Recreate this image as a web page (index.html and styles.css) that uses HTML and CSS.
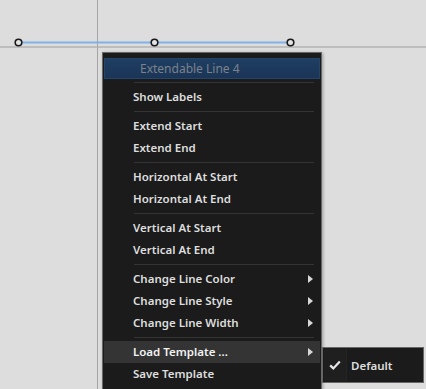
FILE: index.html
```html
<!DOCTYPE html>
<html lang="en">
	<head>
		<meta charset="UTF-8" />
		<meta name="viewport" content="width=device-width, initial-scale=1.0" />
		<title>Chart Context Menu</title>
		<link rel="stylesheet" href="styles.css">
	</head>

	<body>
		<div class="chart">
			<svg class="canvas" width="426" height="389" viewBox="0 0 426 389">
				<line x1="97.5" y1="0" x2="97.5" y2="389" stroke="#a4a4a4" stroke-width="1" />
				<line x1="0" y1="47" x2="426" y2="47" stroke="#b2b2b2" stroke-width="1.5" />
				<line x1="18" y1="42.5" x2="290" y2="42.5" stroke="#7fb2ea" stroke-width="2" />
				<circle cx="18.5" cy="42.5" r="3.3" fill="#e4e4e4" stroke="#1a1a1a" stroke-width="1.6" />
				<circle cx="154.5" cy="42.5" r="3.3" fill="#e4e4e4" stroke="#1a1a1a" stroke-width="1.6" />
				<circle cx="290.5" cy="42.5" r="3.3" fill="#e4e4e4" stroke="#1a1a1a" stroke-width="1.6" />
			</svg>

			<div class="menu">
				<div class="menu-title">Extendable Line 4</div>
				<div class="separator"></div>
				<div class="menu-item">Show Labels</div>
				<div class="separator"></div>
				<div class="menu-item">Extend Start</div>
				<div class="menu-item">Extend End</div>
				<div class="separator"></div>
				<div class="menu-item">Horizontal At Start</div>
				<div class="menu-item">Horizontal At End</div>
				<div class="separator"></div>
				<div class="menu-item">Vertical At Start</div>
				<div class="menu-item">Vertical At End</div>
				<div class="separator"></div>
				<div class="menu-item has-sub">Change Line Color</div>
				<div class="menu-item has-sub">Change Line Style</div>
				<div class="menu-item has-sub">Change Line Width</div>
				<div class="separator"></div>
				<div class="menu-item has-sub active">Load Template ...</div>
				<div class="menu-item">Save Template</div>
			</div>

			<div class="submenu">
				<div class="submenu-item">
					<span class="check">
						<svg width="12" height="10" viewBox="0 0 12 10">
							<path d="M1.2 5.4 L4.3 8.4 L10.8 1.4" fill="none" stroke="#e6e6e6" stroke-width="2.2" />
						</svg>
					</span>
					<span class="label">Default</span>
				</div>
			</div>
		</div>
	</body>
</html>
```

FILE: styles.css
```css
:root {
	--bg-color: #dddddd;
	--menu-bg: #1b1b1b;
	--menu-border: #676767;
	--separator-color: #343434;
	--text-color: #dedede;
	--title-color: #7b828c;
	--active-bg: #343434;
}

body {
	margin: 0;
	background-color: var(--bg-color);
	font-family: "Noto Sans", "Open Sans", sans-serif;
	overflow: hidden;
}

.chart {
	position: relative;
	width: 426px;
	height: 389px;
	overflow: hidden;
}

.canvas {
	position: absolute;
	left: 0;
	top: 0;
}

.menu {
	position: absolute;
	left: 102px;
	top: 52px;
	width: 216px;
	padding: 5px 1px 40px;
	background-color: var(--menu-bg);
	border: 1px solid var(--menu-border);
	box-shadow: 1px 1px 3px rgba(0, 0, 0, 0.3);
}

.menu-title {
	height: 21px;
	line-height: 19px;
	padding-left: 35px;
	font-size: 12px;
	color: var(--title-color);
	background: linear-gradient(#1f3e62, #1a3556);
	border: 1px solid #24466c;
	box-sizing: border-box;
}

.separator {
	height: 1px;
	margin: 3px 6px 3px 30px;
	background-color: var(--separator-color);
}

.menu-item {
	position: relative;
	height: 22px;
	line-height: 22px;
	padding-left: 29px;
	font-size: 11.5px;
	font-weight: 600;
	color: var(--text-color);
	white-space: nowrap;
}

.menu-item.active {
	background-color: var(--active-bg);
	color: #f2f2f2;
}

.has-sub::after {
	content: "";
	position: absolute;
	right: 7px;
	top: 7px;
	border-style: solid;
	border-width: 4px 0 4px 5px;
	border-color: transparent transparent transparent #d8d8d8;
}

.submenu {
	position: absolute;
	left: 322px;
	top: 347px;
	width: 102px;
	height: 36px;
	padding: 1px;
	box-sizing: border-box;
	background-color: var(--menu-bg);
	border: 1px solid var(--menu-border);
}

.submenu-item {
	display: flex;
	align-items: center;
	height: 100%;
	font-size: 11.5px;
	font-weight: 600;
	color: var(--text-color);
}

.check {
	display: flex;
	align-items: center;
	justify-content: center;
	width: 22px;
	height: 100%;
	background-color: #1f1f1f;
	border-right: 1px solid #242424;
}

.label {
	padding-left: 4px;
}
```
